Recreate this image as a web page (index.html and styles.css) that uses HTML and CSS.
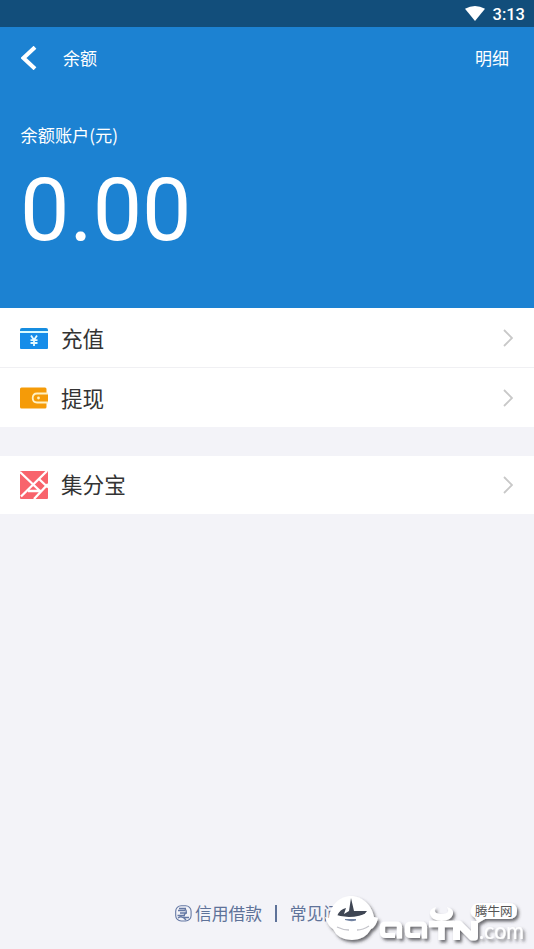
FILE: index.html
```html
<!DOCTYPE html>
<html lang="zh-CN">
<head>
<meta charset="utf-8">
<title>余额</title>
<link rel="stylesheet" href="styles.css">
</head>
<body>
<div class="screen">
  <div class="status">
    <svg class="wifi" width="20" height="15" viewBox="0 0 20 15"><path d="M0 2.8Q10-2.8 20 2.8L10 15Z" fill="#fff"/></svg>
    <span>3:13</span>
  </div>
  <header class="hero">
    <nav class="nav">
      <svg class="back" width="16" height="24" viewBox="0 0 16 24"><path d="M14 1.2L2.500 12L14 22.800" fill="none" stroke="#fff" stroke-width="4"/></svg>
      <span class="title">余额</span>
      <span class="detail">明细</span>
    </nav>
    <div class="label">余额账户(元)</div>
    <div class="amount">0.00</div>
  </header>
  <main>
    <section class="group">
      <div class="row">
        <svg class="icon" width="28" height="28" viewBox="0 0 28 28"><path d="M2 4H26Q28 4 28 6V7H0V6Q0 4 2 4Z" fill="#168de0"/><path d="M0 7H28V9H0Z" fill="#d9fbff"/><path d="M0 9H28V24Q28 25 27 25H1Q0 25 0 24Z" fill="#168de9"/><path d="M11 11.5L14 16L17 11.5M14 16V22M10.5 16.2H17.5M10.5 19H17.5" stroke="#e5faff" stroke-width="1.8" fill="none"/></svg>
        <span class="name">充值</span>
        <svg class="chevron" width="10" height="18" viewBox="0 0 10 18"><path d="M1 1L9 9L1 17"/></svg>
      </div>
      <div class="row second">
        <svg class="icon" width="28" height="28" viewBox="0 0 28 28"><rect y="3.5" width="26.5" height="21" rx="1.5" fill="#f59b08"/><path d="M28 9.5H17Q12.7 9.5 12.7 14T17 18.5H28" fill="#f59b08" stroke="#fff1c2" stroke-width="1.8"/><circle cx="18.5" cy="14" r="1.4" fill="#fff1c2"/></svg>
        <span class="name">提现</span>
        <svg class="chevron" width="10" height="18" viewBox="0 0 10 18"><path d="M1 1L9 9L1 17"/></svg>
      </div>
    </section>
    <section class="group last">
      <div class="row third">
        <svg class="icon" width="28" height="28" viewBox="0 0 28 28"><rect width="28" height="28" rx="1" fill="#f8646c"/><path d="M0 1L20 20M27 0L1 25.5M19 8L28 16.5M28 13L14 28M8 20H21" stroke="#fff" stroke-width="2.3" fill="none"/></svg>
        <span class="name">集分宝</span>
        <svg class="chevron" width="10" height="18" viewBox="0 0 10 18"><path d="M1 1L9 9L1 17"/></svg>
      </div>
    </section>
  </main>
  <footer class="links">
    <svg class="credit" width="17" height="17" viewBox="0 0 17 17"><g fill="none" stroke="#6478a4" stroke-width="1.1"><rect x=".7" y=".8" width="15.4" height="15.2" rx="5.5"/><path d="M4 3.5H11M3 5.5H10M5 8H12M2.5 10.5H10M8 12.5H14M3 13Q7 10 11 15M10 4Q13 7 9 10" stroke-width="1.4"/></g></svg>
    <span class="credit-text">信用借款</span><span class="bar"></span><span>常见问题</span>
  </footer>
  <svg class="watermark" width="214" height="69" viewBox="320 880 214 69">
    <defs><filter id="shadow" x="-20%" y="-20%" width="150%" height="150%"><feDropShadow dx="2" dy="2.5" stdDeviation="1.5" flood-color="#303038" flood-opacity=".7"/></filter></defs>
    <g filter="url(#shadow)">
      <path d="M351 896C362 896 372 905 374 917L378 918Q376 927 371 929Q365 940 352 940Q338 940 333 929Q328 926 325 917L329 918C330 905 340 896 351 896Z" fill="#fff"/>
      <g fill="none" stroke="#fff" stroke-width="5.2" stroke-linejoin="round"><path d="M395 935.5H386Q382.500 935.500 382.500 932V927Q382.500 924 386 924H396Q399.500 924 399.500 927V938.5M420 935.500H411Q407.500 935.500 407.500 932V927Q407.500 924 411 924H421Q424.500 924 424.500 927V938.5"/><path d="M429 924H454M441.500 924V940" stroke-width="6.5"/><path d="M456.500 940V924H459L472 937H474.500V921" stroke-width="7"/></g>
      <path d="M436 907Q429 909 430 914Q432 921 441.500 921T453 914Q454 909 447 907Q451 914 441.500 914T436 907Z" fill="#fff"/>
      <path d="M479 903H509Q517 903 517 911T509 919H485L478 923L475 918Q469 914 471 909Q473 903 479 903Z" fill="#fff"/>
      <text x="479" y="939" class="domain" textLength="45" lengthAdjust="spacingAndGlyphs">.com</text>
    </g>
    <path d="M337 916Q340 909 346 908L344 914L349 911L351 898L354 911L367 911Q363 918 351 918Q343 918 337 916Z" fill="#3f4654"/>
    <path d="M333 915Q351 922 370 913" fill="none" stroke="#fff" stroke-width="2"/>
    <path d="M345 919H356V920.500Q351 922 345 920Z" fill="#7182a1"/>
    <path d="M337 927Q343 930 349 930M369 926Q363 930 357 930" fill="none" stroke="#c4c4ca" stroke-width="1.3"/>
    <text x="475" y="915.500" class="brand">腾牛网</text>
  </svg>
</div>
</body>
</html>
```
FILE: styles.css
```css
* { box-sizing: border-box; }
body { margin: 0; background: #f3f3f8; font-family: Roboto, "Noto Sans CJK SC", sans-serif; }
.screen { position: relative; height: 949px; overflow: hidden; display: flex; flex-direction: column; }
.status { height: 27px; flex: none; background: #124e7b; color: #fff; display: flex; justify-content: flex-end; align-items: center; gap: 8px; padding: 2px 9px 0 0; font-size: 16.5px; font-weight: 500; }
.wifi { margin-bottom: 3px; }
.hero { height: 281px; flex: none; background: #1c82d2; color: #fff; }
.nav { height: 62px; display: flex; align-items: center; padding: 0 25px 0 21px; font-size: 17px; }
.title, .detail { padding-bottom: 2px; }
.title { margin-left: 26px; }
.detail { margin-left: auto; }
.label { margin: 33px 0 0 20.5px; height: 25px; font: 17.2px/25px "Noto Sans CJK SC", sans-serif; }
.amount { margin: 13px 0 0 20px; font-size: 88px; line-height: 100px; }
.group { background: #fff; }
.row { height: 60px; padding: 0 21px 0 20px; display: flex; align-items: center; border-bottom: 1px solid #f0f0f3; }
.second { height: 59px; border: 0; }
.last { margin-top: 29px; }
.third { height: 58px; border: 0; }
.icon { margin-right: 13px; }
.name { padding-top: 4px; font-size: 21.6px; line-height: 30px; color: #333; }
.third .name { padding-top: 2px; }
.chevron { margin-left: auto; fill: none; stroke: #c8c8c8; stroke-width: 1.8; }
.links { margin-top: auto; height: 72px; padding-left: 175px; display: flex; align-items: center; color: #5e7299; font-size: 16.8px; white-space: nowrap; }
.credit { margin-right: 3px; }
.bar { width: 1.5px; height: 17px; margin: 0 13px; background: #5e7299; }
.watermark { position: absolute; right: 0; bottom: 0; }
.domain { font: 23px Lato, sans-serif; fill: #fff; }
.brand { font: 12.5px "Noto Sans CJK SC", sans-serif; fill: #555; }
```
